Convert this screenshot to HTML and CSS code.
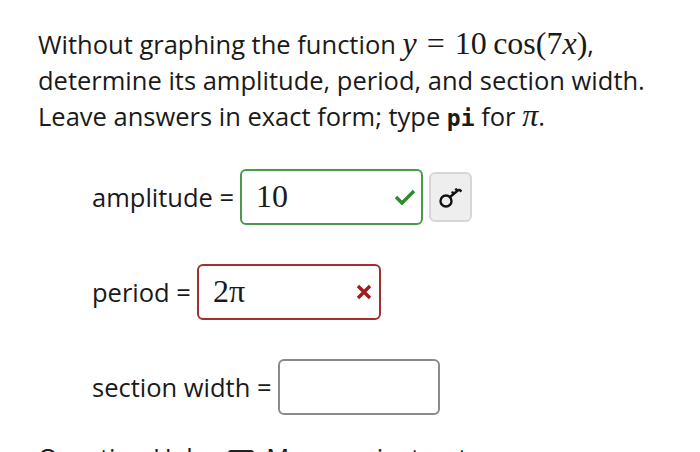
FILE: index.html
```html
<!DOCTYPE html>
<html>
<head>
<meta charset="utf-8">
<link rel="stylesheet" href="styles.css">
</head>
<body>
<div class="page">
  <p class="prompt">Without graphing the function <span class="math"><i>y</i><span class="op">=</span>10&#8201;cos(7<i>x</i>)</span>,<br>determine its amplitude, period, and section width.<br>Leave answers in exact form; type <code>pi</code> for <span class="math"><i>π</i></span>.</p>

  <div class="rows">
    <div class="row">
      <span class="label">amplitude =</span>
      <div class="box correct">
        <span class="val">10</span>
        <svg class="mark" width="22" height="18" viewBox="0 0 22 18"><path d="M2 9 L8 15 L20 3" fill="none" stroke="#2e8b2e" stroke-width="3.4"/></svg>
      </div>
      <button class="keybtn" type="button">
        <svg width="26" height="24" viewBox="0 0 26 24"><circle cx="8" cy="16" r="5.5" fill="none" stroke="#111" stroke-width="2.4"/><path d="M12 12 L21 4.5 M15.5 9 L14 6.5 M19 6 L17.5 3.5 M21 4.5 L23.5 6.5" fill="none" stroke="#111" stroke-width="2.4"/></svg>
      </button>
    </div>

    <div class="row">
      <span class="label">period =</span>
      <div class="box wrong">
        <span class="val">2π</span>
        <svg class="mark" width="20" height="20" viewBox="0 0 20 20"><path d="M4 4 L16 16 M16 4 L4 16" fill="none" stroke="#a11d1d" stroke-width="3.4"/></svg>
      </div>
    </div>

    <div class="row">
      <span class="label">section width =</span>
      <div class="box empty"></div>
    </div>
  </div>

  <div class="footer">Question Help: <span class="msg"></span> Message instructor</div>
</div>
</body>
</html>
```

FILE: styles.css
```css
html, body {
  margin: 0;
  padding: 0;
  background: #fff;
}
.page {
  padding: 26px 0 0 38px;
  font-family: "Open Sans", "DejaVu Sans", sans-serif;
  color: #1a1a1a;
  overflow: hidden;
  height: 452px;
  box-sizing: border-box;
}
.prompt {
  margin: 0;
  font-size: 25.5px;
  line-height: 35.5px;
}
.math {
  font-family: "Liberation Serif", "DejaVu Serif", serif;
  font-size: 32px;
}
.math .op {
  margin: 0 10px;
}
code {
  font-family: "DejaVu Sans Mono", monospace;
  font-weight: bold;
  font-size: 23px;
}
.rows {
  margin-top: 32px;
  padding-left: 54px;
  display: flex;
  flex-direction: column;
  gap: 39px;
}
.row {
  display: flex;
  align-items: center;
  height: 56px;
}
.label {
  font-size: 25.5px;
  margin-right: 6px;
}
.box {
  box-sizing: border-box;
  height: 56px;
  border: 2px solid #888;
  border-radius: 6px;
  display: flex;
  align-items: center;
  padding: 0 5px 0 14px;
}
.box .val {
  flex: 1;
  font-family: "Liberation Serif", "DejaVu Serif", serif;
  font-size: 32px;
}
.correct {
  width: 183px;
  border-color: #4a9a4a;
}
.wrong {
  width: 184px;
  border-color: #a03030;
}
.empty {
  width: 162px;
  border-color: #8a8a8a;
}
.keybtn {
  margin-left: 6px;
  width: 43px;
  height: 50px;
  border: 2px solid #d6d6d6;
  border-radius: 6px;
  background: #eeeeee;
  display: flex;
  align-items: center;
  justify-content: center;
  padding: 0;
}
.footer {
  margin-top: 27px;
  font-size: 25.5px;
  line-height: 30px;
  color: #1a1a1a;
}
.msg {
  display: inline-block;
  width: 26px;
  height: 20px;
  margin: 0 6px;
  border: 3px solid #222;
  border-radius: 3px;
  box-sizing: border-box;
  vertical-align: middle;
}
```
